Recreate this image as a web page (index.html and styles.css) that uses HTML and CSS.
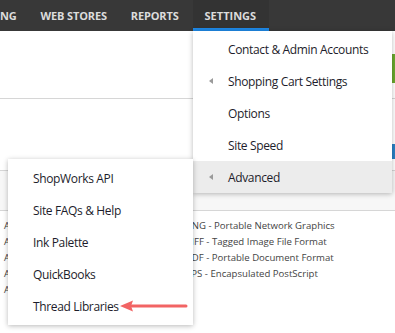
FILE: index.html
```html
<!DOCTYPE html>
<html lang="en">
<head>
    <meta charset="UTF-8">
    <title>Settings Menu</title>
    <link rel="stylesheet" href="styles.css">
</head>
<body>
    <nav class="top-nav">
        <a class="nav-item">NG</a>
        <a class="nav-item">WEB STORES</a>
        <a class="nav-item">REPORTS</a>
        <a class="nav-item active">SETTINGS</a>
    </nav>

    <div class="page">
        <div class="page-head">
            <span class="btn btn-green">Save</span>
        </div>
        <div class="toolbar">
            <span class="btn btn-blue">Add</span>
        </div>
        <div class="table-head"></div>
        <div class="table-rows">
            <div class="row"><span class="col-a">AI</span><span class="col-b">PNG - Portable Network Graphics</span></div>
            <div class="row"><span class="col-a">AI</span><span class="col-b">TIFF - Tagged Image File Format</span></div>
            <div class="row"><span class="col-a">AI</span><span class="col-b">PDF - Portable Document Format</span></div>
            <div class="row"><span class="col-a">AI</span><span class="col-b">EPS - Encapsulated PostScript</span></div>
            <div class="row"><span class="col-a">AI</span><span class="col-b"></span></div>
        </div>
    </div>

    <!-- settings dropdown -->
    <ul class="dropdown">
        <li>Contact &amp; Admin Accounts</li>
        <li class="has-sub">Shopping Cart Settings</li>
        <li>Options</li>
        <li>Site Speed</li>
        <li class="has-sub hover">Advanced</li>
    </ul>

    <!-- advanced submenu -->
    <ul class="submenu">
        <li>ShopWorks API</li>
        <li>Site FAQs &amp; Help</li>
        <li>Ink Palette</li>
        <li>QuickBooks</li>
        <li>Thread Libraries</li>
    </ul>

    <svg class="callout-arrow" width="70" height="12" viewBox="0 0 70 12">
        <line x1="10" y1="6" x2="66" y2="6" stroke="#f26464" stroke-width="3" stroke-linecap="round"/>
        <polygon points="0,6 13,0.5 11,6 13,11.5" fill="#f26464"/>
    </svg>
</body>
</html>
```

FILE: styles.css
```css
* {
    margin: 0;
    padding: 0;
    box-sizing: border-box;
}

body {
    font-family: 'Open Sans', 'Liberation Sans', sans-serif;
    background-color: #fff;
    color: #222;
    width: 395px;
    height: 333px;
    overflow: hidden;
    position: relative;
}

.top-nav {
    display: flex;
    height: 31px;
    background-color: #383838;
}

.nav-item {
    display: flex;
    align-items: center;
    padding: 0 12px;
    color: #dcdcdc;
    font-size: 11px;
    font-weight: 700;
    letter-spacing: -0.15px;
}

.nav-item:first-child {
    padding-left: 0;
}

.nav-item.active {
    margin-left: 2px;
    padding: 3px 13px 0 12px;
    background-color: #333;
    border-bottom: 3px solid #1e88e5;
    letter-spacing: 0;
}

.page-head {
    height: 68px;
    border-bottom: 1px solid #d6d6d6;
    display: flex;
    justify-content: flex-end;
    align-items: flex-start;
    padding-top: 23px;
}

.btn {
    color: #fff;
    font-size: 12px;
    display: flex;
    align-items: center;
    padding: 0 14px;
}

.btn-green {
    background-color: #6aa82e;
    height: 29px;
}

.btn-blue {
    background-color: #2a80c4;
    height: 15px;
}

.toolbar {
    height: 72px;
    border-bottom: 1px solid #d6d6d6;
    display: flex;
    justify-content: flex-end;
    align-items: flex-start;
    padding-top: 45px;
}

.table-head {
    height: 40px;
    background-color: #f7f7f7;
    border-bottom: 1px solid #d6d6d6;
}

.table-rows {
    padding-top: 7px;
}

.row {
    display: flex;
    height: 15.8px;
    font-size: 9.6px;
    color: #444;
    align-items: center;
}

.col-a {
    width: 186px;
    padding-left: 4px;
    white-space: nowrap;
}

.col-b {
    white-space: nowrap;
}

.dropdown,
.submenu {
    list-style: none;
    position: absolute;
    background-color: #fff;
    box-shadow: 0 1px 5px rgba(0, 0, 0, 0.28);
}

.dropdown {
    left: 193px;
    top: 31px;
    width: 199px;
    padding-top: 2px;
}

.submenu {
    left: 8px;
    top: 159px;
    width: 185px;
    padding: 3px 0;
}

.dropdown li,
.submenu li {
    height: 32px;
    display: flex;
    align-items: center;
    font-size: 12px;
    letter-spacing: -0.35px;
    color: #1d1d2b;
    position: relative;
}

.dropdown li {
    padding-left: 35px;
}

.submenu li {
    padding-left: 25px;
}

.dropdown li.hover {
    background-color: #ececec;
}

.has-sub::before {
    content: '';
    position: absolute;
    left: 16px;
    top: 13px;
    border-top: 3px solid transparent;
    border-bottom: 3px solid transparent;
    border-right: 4px solid #9a9a9a;
}

.callout-arrow {
    position: absolute;
    left: 120px;
    top: 300px;
}
```
